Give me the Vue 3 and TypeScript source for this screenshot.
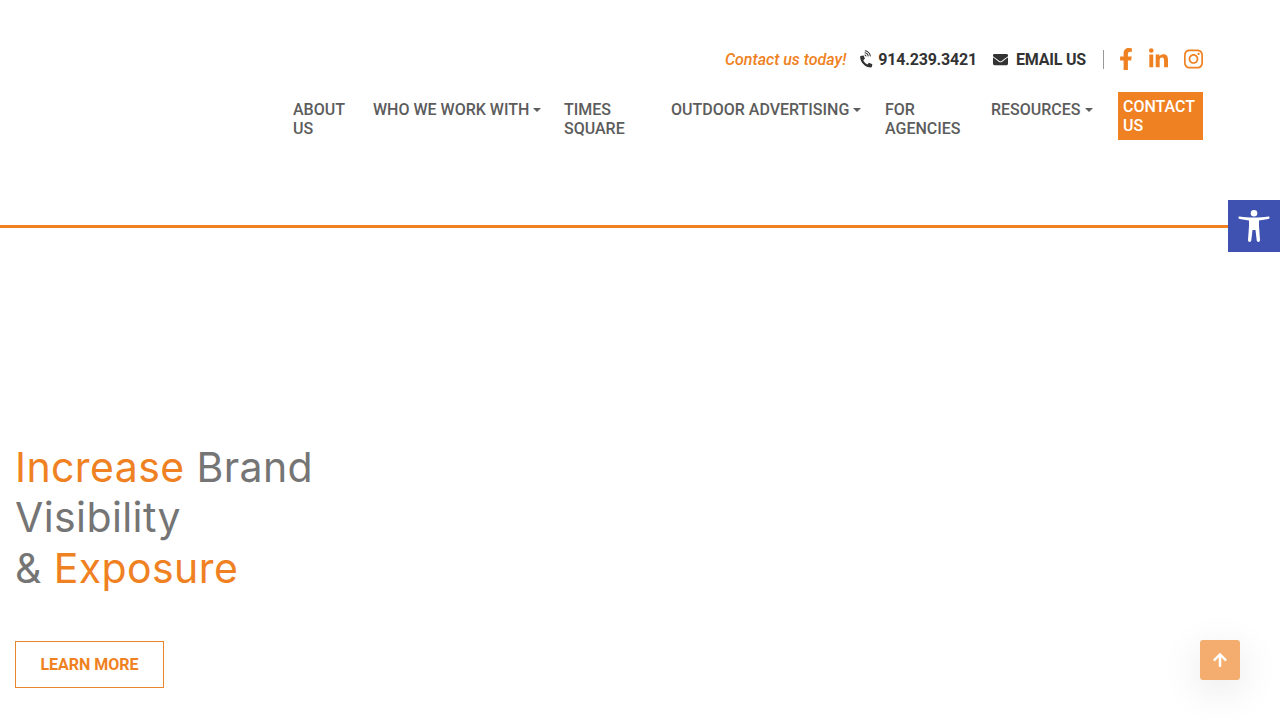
<template>
  <header class="site-header">
    <div class="top-bar">
      <em class="today">Contact us today!</em>
      <a class="top-link phone">
        <svg class="ico-phone" viewBox="0 0 384 512"><path :d="icons.phone" /></svg>
        914.239.3421
      </a>
      <a class="top-link email">
        <svg class="ico-mail" viewBox="0 0 512 512"><path :d="icons.mail" /></svg>
        EMAIL US
      </a>
      <span class="divider"></span>
      <div class="socials">
        <svg class="ico-fb" viewBox="0 0 320 512"><path :d="icons.facebook" /></svg>
        <svg class="ico-in" viewBox="0 0 448 512"><path :d="icons.linkedin" /></svg>
        <svg class="ico-ig" viewBox="0 0 448 512"><path :d="icons.instagram" /></svg>
      </div>
    </div>

    <nav class="main-nav">
      <a v-for="item in navItems" :key="item.label" class="nav-item" :class="{ 'has-caret': item.caret }">
        {{ item.label }}<span v-if="item.caret" class="caret"></span>
      </a>
      <a class="nav-cta">CONTACT US</a>
    </nav>
  </header>

  <section class="hero">
    <h1>
      <span class="hl">Increase</span> Brand<br />
      Visibility<br />
      &amp; <span class="hl">Exposure</span>
    </h1>
    <a class="learn-more">LEARN MORE</a>
  </section>

  <button class="a11y-toggle" aria-label="Accessibility tools">
    <svg viewBox="0 0 32 32">
      <circle cx="16" cy="3.300" r="3.300" />
      <path d="M1.800 6.400C6 7 11 7.600 16 7.600s10-.6 14.200-1.200c.9-.1 1.400.5 1.400 1.200s-.4 1.200-1.200 1.400L21 10.400V16l1 14c.1 1-.5 1.900-1.500 1.900s-1.700-.7-1.800-1.600L17.500 20h-3l-1.200 10.300c-.1.900-.8 1.600-1.800 1.600s-1.600-.9-1.500-1.900l1-14v-5.600L1.600 9C.8 8.800.4 8.300.4 7.600s.5-1.300 1.400-1.200z" />
    </svg>
  </button>

  <button class="to-top" aria-label="Back to top">
    <svg viewBox="0 0 448 512"><path :d="icons.arrowUp" /></svg>
  </button>
</template>

<script setup lang="ts">
interface NavItem {
  label: string
  caret?: boolean
}

const navItems: NavItem[] = [
  { label: 'ABOUT US' },
  { label: 'WHO WE WORK WITH', caret: true },
  { label: 'TIMES SQUARE' },
  { label: 'OUTDOOR ADVERTISING', caret: true },
  { label: 'FOR AGENCIES' },
  { label: 'RESOURCES', caret: true },
]

const icons = {
  phone:
    'M97.333 506.966c-129.874-129.874-129.681-340.252 0-469.933 5.698-5.698 14.527-6.632 21.263-2.422l64.817 40.513a17.187 17.187 0 0 1 6.849 20.958l-32.408 81.021a17.188 17.188 0 0 1-17.669 10.719l-55.81-5.58c-21.051 58.261-20.612 122.471 0 179.515l55.811-5.581a17.188 17.188 0 0 1 17.669 10.719l32.408 81.022a17.188 17.188 0 0 1-6.849 20.958l-64.817 40.513a17.19 17.19 0 0 1-21.264-2.422zM247.126 95.473c11.832 20.047 11.832 45.008 0 65.055-3.95 6.693-13.108 7.959-18.718 2.581l-5.975-5.726c-3.911-3.748-4.793-9.622-2.261-14.41a32.063 32.063 0 0 0 0-29.945c-2.533-4.788-1.65-10.662 2.261-14.41l5.975-5.726c5.61-5.378 14.768-4.112 18.718 2.581zm91.787-91.187c60.14 71.604 60.092 175.882 0 247.428-4.474 5.327-12.53 5.746-17.552.933l-5.798-5.557c-4.56-4.371-4.977-11.529-.93-16.379 49.687-59.538 49.646-145.933 0-205.422-4.047-4.85-3.631-12.008.93-16.379l5.798-5.557c5.022-4.813 13.078-4.394 17.552.933zm-45.972 44.941c36.05 46.322 36.108 111.149 0 157.546-4.39 5.641-12.697 6.251-17.856 1.304l-5.818-5.579c-4.4-4.219-4.998-11.095-1.285-15.931 26.536-34.564 26.534-82.572 0-117.134-3.713-4.836-3.115-11.711 1.285-15.931l5.818-5.579c5.159-4.947 13.466-4.337 17.856 1.304z',
  mail:
    'M502.3 190.8c3.9-3.1 9.7-.2 9.7 4.7V400c0 26.5-21.5 48-48 48H48c-26.5 0-48-21.5-48-48V195.6c0-5 5.7-7.8 9.7-4.7 22.4 17.4 52.1 39.5 154.1 113.6 21.1 15.4 56.7 47.8 92.2 47.6 35.7.3 72-32.8 92.3-47.6 102-74.1 131.6-96.3 154-113.7zM256 320c23.2.4 56.6-29.2 73.4-41.4 132.7-96.3 142.8-104.7 173.4-128.7 5.8-4.5 9.2-11.5 9.2-18.9v-19c0-26.5-21.5-48-48-48H48C21.5 64 0 85.5 0 112v19c0 7.4 3.4 14.3 9.2 18.9 30.6 23.9 40.7 32.4 173.4 128.7 16.8 12.2 50.2 41.8 73.4 41.4z',
  facebook:
    'M279.14 288l14.22-92.66h-88.91v-60.13c0-25.35 12.42-50.06 52.24-50.06h40.42V6.26S260.43 0 225.36 0c-73.22 0-121.08 44.38-121.08 124.72v70.62H22.89V288h81.39v224h100.17V288z',
  linkedin:
    'M100.28 448H7.4V148.9h92.88zM53.79 108.1C24.09 108.1 0 83.5 0 53.8a53.79 53.79 0 0 1 107.58 0c0 29.7-24.1 54.3-53.79 54.3zM447.9 448h-92.68V302.4c0-34.7-.7-79.2-48.29-79.2-48.29 0-55.69 37.7-55.69 76.7V448h-92.78V148.9h89.08v40.8h1.3c12.4-23.5 42.69-48.3 87.88-48.3 94 0 111.28 61.9 111.28 142.3V448z',
  instagram:
    'M224.1 141c-63.6 0-114.9 51.3-114.9 114.9s51.3 114.9 114.9 114.9S339 319.5 339 255.9 287.7 141 224.1 141zm0 189.6c-41.1 0-74.7-33.5-74.7-74.7s33.5-74.7 74.7-74.7 74.7 33.5 74.7 74.7-33.6 74.7-74.7 74.7zm146.4-194.3c0 14.9-12 26.8-26.8 26.8-14.9 0-26.8-12-26.8-26.8s12-26.8 26.8-26.8 26.8 12 26.8 26.8zm76.1 27.2c-1.7-35.9-9.9-67.7-36.2-93.9-26.2-26.2-58-34.4-93.9-36.2-37-2.1-147.9-2.1-184.9 0-35.8 1.7-67.6 9.9-93.9 36.1s-34.4 58-36.2 93.9c-2.1 37-2.1 147.9 0 184.9 1.7 35.9 9.9 67.7 36.2 93.9s58 34.4 93.9 36.2c37 2.1 147.9 2.1 184.9 0 35.9-1.7 67.7-9.9 93.9-36.2 26.2-26.2 34.4-58 36.2-93.9 2.1-37 2.1-147.8 0-184.8zM398.8 388c-7.8 19.6-22.9 34.7-42.6 42.6-29.5 11.7-99.5 9-132.1 9s-102.7 2.6-132.1-9c-19.6-7.8-34.7-22.9-42.6-42.6-11.7-29.5-9-99.5-9-132.1s-2.6-102.7 9-132.1c7.8-19.6 22.9-34.7 42.6-42.6 29.5-11.7 99.5-9 132.1-9s102.7-2.6 132.1 9c19.6 7.8 34.7 22.9 42.6 42.6 11.7 29.5 9 99.5 9 132.1s2.7 102.7-9 132.1z',
  arrowUp:
    'M34.9 289.5l-22.2-22.2c-9.4-9.4-9.4-24.6 0-33.9L207 39c9.4-9.4 24.6-9.4 33.9 0l194.3 194.3c9.4 9.4 9.4 24.6 0 33.9L413 289.4c-9.5 9.5-25 9.3-34.3-.4L264 168.6V456c0 13.3-10.7 24-24 24h-32c-13.3 0-24-10.7-24-24V168.6L69.2 289.1c-9.3 9.8-24.8 10-34.3.4z',
}
</script>

<style scoped>
.site-header {
  padding: 48px 77px 85px 0;
  border-bottom: 3px solid #ef8122;
  font-family: Roboto, 'Liberation Sans', sans-serif;
}

.top-bar {
  display: flex;
  justify-content: flex-end;
  align-items: center;
  height: 22px;
  font-size: 16px;
  font-weight: 500;
  color: #333;
}

.today {
  color: #ef8122;
  margin-right: 15px;
}

.top-link {
  display: flex;
  align-items: center;
  color: #333;
  font-weight: 700;
  letter-spacing: -0.2px;
}

.phone {
  margin-right: 16px;
}

.ico-phone {
  width: 13px;
  height: 17px;
  margin-right: 4px;
  fill: #333;
  transform: rotate(-45deg);
}

.ico-mail {
  width: 15px;
  height: 15px;
  margin-right: 8px;
  fill: #333;
}

.divider {
  width: 1px;
  height: 19px;
  margin: 0 15px 0 17px;
  background: #999;
}

.socials {
  display: flex;
  align-items: center;
  gap: 16px;
}

.socials svg {
  fill: #ef8122;
}

.ico-fb {
  width: 14px;
  height: 22px;
}

.ico-in {
  width: 19px;
  height: 22px;
}

.ico-ig {
  width: 19px;
  height: 22px;
}

.main-nav {
  display: grid;
  grid-template-columns: 56px 167px 83px 190px 82px 103px 85px;
  column-gap: 24px;
  justify-content: end;
  margin-top: 22px;
  font-size: 16px;
  font-weight: 500;
  line-height: 19px;
}

.nav-item {
  padding-top: 8px;
  color: #5c5c5c;
}

.has-caret {
  white-space: nowrap;
}

.caret {
  display: inline-block;
  margin-left: 4px;
  vertical-align: 3px;
  border-top: 4px solid #5c5c5c;
  border-left: 4px solid transparent;
  border-right: 4px solid transparent;
}

.nav-cta {
  padding: 5px;
  background: #ef8122;
  color: #fff;
}

.hero {
  padding: 214px 0 0 15px;
}

.hero h1 {
  margin: 0;
  font-family: Inter, Lato, sans-serif;
  font-size: 41px;
  font-weight: 400;
  letter-spacing: 0.4px;
  line-height: 50.4px;
  color: #757575;
}

.hl {
  color: #ef8122;
}

.learn-more {
  display: flex;
  align-items: center;
  justify-content: center;
  width: 149px;
  height: 47px;
  box-sizing: border-box;
  margin-top: 48px;
  border: 1px solid #e8852f;
  font-family: Roboto, 'Liberation Sans', sans-serif;
  font-size: 16px;
  font-weight: 700;
  color: #ef8122;
}

.a11y-toggle {
  position: fixed;
  top: 200px;
  right: 0;
  width: 52px;
  height: 52px;
  padding: 10px;
  border: none;
  background: #3f51b1;
}

.a11y-toggle svg {
  display: block;
  width: 32px;
  height: 32px;
  fill: #fff;
}

.to-top {
  position: fixed;
  right: 40px;
  bottom: 40px;
  display: flex;
  align-items: center;
  justify-content: center;
  width: 40px;
  height: 40px;
  padding: 0;
  border: none;
  border-radius: 3px;
  background: rgba(239, 129, 34, 0.65);
  box-shadow: 0 10px 40px rgba(0, 0, 0, 0.1);
}

.to-top svg {
  width: 14px;
  height: 16px;
  fill: #fff;
}
</style>

<style>
body {
  background: #fff;
}
</style>
